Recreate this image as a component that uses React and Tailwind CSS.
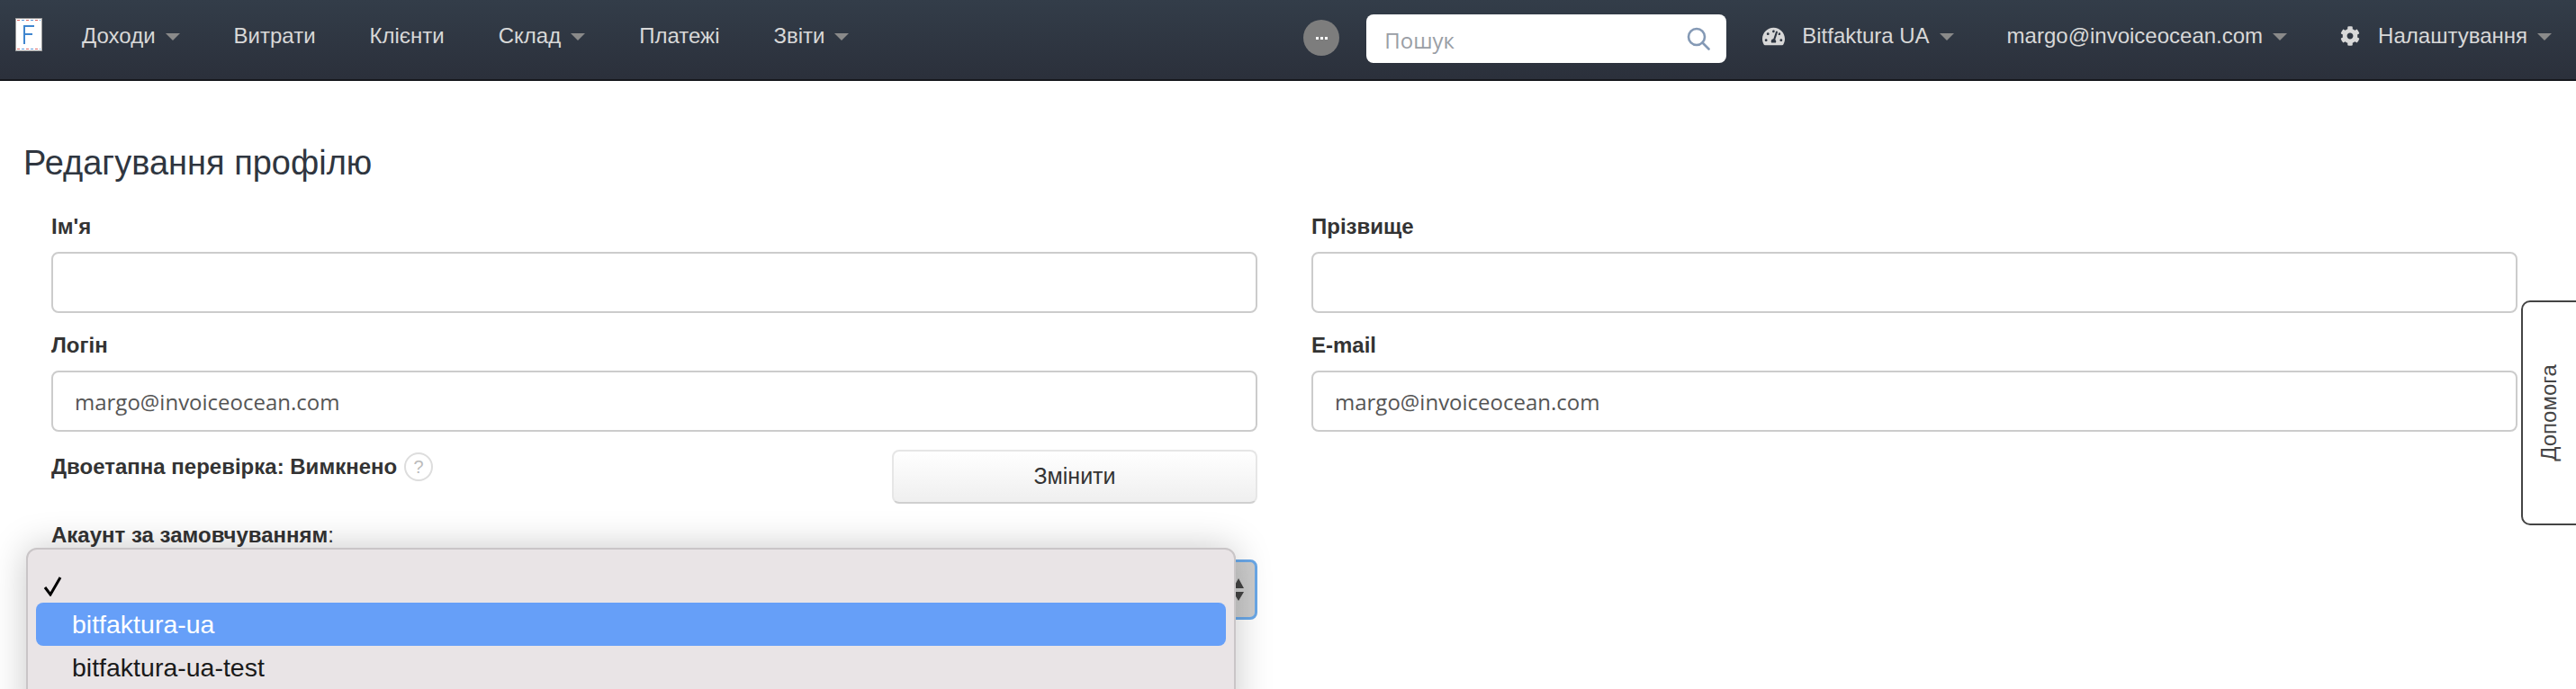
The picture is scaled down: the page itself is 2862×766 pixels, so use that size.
import React from "react";
import { FaCog, FaTachometerAlt } from "react-icons/fa";

const font = "font-['Liberation_Sans',Arial,sans-serif]";

function Caret() {
  return <span className="ml-[11px] mt-[1px] inline-block h-0 w-0 border-x-[8px] border-t-[8px] border-x-transparent border-t-[#8a8a8a]" />;
}

function NavItem({ label, caret, className }) {
  return (
    <a className={"flex items-center whitespace-nowrap text-[24px] text-[#d8d8d8] " + (className || "")}>
      {label}
      {caret && <Caret />}
    </a>
  );
}

function Logo() {
  return (
    <div className="mb-[11px] flex h-[37px] w-[30px] flex-col items-center justify-between border border-[#999] bg-white py-[1px]">
      <div className="h-[1px] w-[26px] bg-[repeating-linear-gradient(90deg,#e0655f_0,#e0655f_3px,#fff_3px,#fff_5px,#5a9bdc_5px,#5a9bdc_8px,#fff_8px,#fff_10px)]" />
      <svg width="12" height="21" viewBox="0 0 12 21">
        <path d="M1 0v21M1 1h11M1 10h9" stroke="#3f86cf" strokeWidth="2" fill="none" />
      </svg>
      <div className="h-[1px] w-[26px] bg-[repeating-linear-gradient(90deg,#e0655f_0,#e0655f_3px,#fff_3px,#fff_5px,#5a9bdc_5px,#5a9bdc_8px,#fff_8px,#fff_10px)]" />
    </div>
  );
}

function Field({ label, value }) {
  return (
    <div className="flex flex-col">
      <label className="mb-[14px] h-[30px] pt-[2px] text-[24px] font-bold leading-[28px] text-[#333]">{label}</label>
      <div className="flex h-[68px] items-center rounded-[8px] border-2 border-[#ccc] bg-white pl-[24px] pt-[2px] font-['Open_Sans',sans-serif] text-[24px] text-[#555]">
        {value}
      </div>
    </div>
  );
}

function Header() {
  return (
    <header className="flex h-[90px] items-center border-b-2 border-[#16181d] bg-gradient-to-b from-[#333d49] to-[#2b303b] pl-[17px]">
      <Logo />
      <nav className="mb-[8px] ml-[44px] flex">
        <NavItem label="Доходи" caret className="mr-[60px]" />
        <NavItem label="Витрати" className="mr-[60px]" />
        <NavItem label="Клієнти" className="mr-[60px]" />
        <NavItem label="Склад" caret className="mr-[60px]" />
        <NavItem label="Платежі" className="mr-[60px]" />
        <NavItem label="Звіти" caret />
      </nav>
      <div className="mb-[2px] ml-auto flex items-center pr-[27px]">
        <div className="mb-[2px] flex h-[40px] w-[40px] items-center justify-center gap-[2px] rounded-full bg-[#7d7d7d]">
          <span className="h-[3px] w-[3px] bg-white" />
          <span className="h-[3px] w-[3px] bg-white" />
          <span className="h-[3px] w-[3px] bg-white" />
        </div>
        <div className="ml-[30px] flex h-[54px] w-[400px] items-center justify-between rounded-[8px] bg-white pl-[20px] pr-[18px]">
          <span className="mt-[3px] font-['Open_Sans',sans-serif] text-[24px] text-[#9a9ea5]">Пошук</span>
          <svg width="26" height="26" viewBox="0 0 26 26" fill="none" stroke="#8499b5" strokeWidth="2.6">
            <circle cx="11" cy="11" r="9" />
            <path d="M17.500 17.500 24.500 24.500" strokeLinecap="round" />
          </svg>
        </div>
        <div className="mb-[6px] ml-[40px] flex items-center">
          <FaTachometerAlt className="mr-[19px] text-[25px] text-[#d8d8d8]" />
          <NavItem label="Bitfaktura UA" caret />
        </div>
        <NavItem label="margo@invoiceocean.com" caret className="mb-[6px] ml-[59px]" />
        <div className="mb-[6px] ml-[59px] flex items-center">
          <FaCog className="mr-[20px] text-[22px] text-[#d8d8d8]" />
          <NavItem label="Налаштування" caret />
        </div>
      </div>
    </header>
  );
}

function SelectPopup() {
  return (
    <div className="absolute left-[29px] top-[609px] h-[200px] w-[1344px] rounded-t-[12px] border-2 border-[#c9c5c7] bg-[#e9e4e6] px-[9px] pt-[23px] text-[28.5px] text-[#1a1a1a] shadow-[0_0_40px_rgba(0,0,0,0.22)]">
      <div className="flex h-[36px] items-center pl-[8px]">
        <svg width="22" height="22" viewBox="0 0 22 22" fill="none" stroke="#000" strokeWidth="3">
          <path d="M2 12l6 8L19 1" />
        </svg>
      </div>
      <div className="flex h-[48px] items-center rounded-[8px] bg-[#669ff8] pl-[40px] text-white">bitfaktura-ua</div>
      <div className="flex h-[48px] items-center pl-[40px]">bitfaktura-ua-test</div>
    </div>
  );
}

export default function App() {
  return (
    <div className={"relative h-[766px] overflow-hidden bg-white " + font}>
      <Header />
      <main className="pl-[26px]">
        <h1 className="mt-[68px] text-[38px] font-normal leading-[46px] text-[#2f3640]">Редагування профілю</h1>
        <div className="mt-[32px] grid grid-cols-[1340px_1340px] gap-x-[60px] gap-y-[20px] pl-[31px]">
          <Field label="Ім'я" value="" />
          <Field label="Прізвище" value="" />
          <Field label="Логін" value="margo@invoiceocean.com" />
          <Field label="E-mail" value="margo@invoiceocean.com" />
          <div>
            <div className="flex h-[60px] items-start justify-between">
              <div className="flex items-center pt-[1px] text-[24px] font-bold text-[#333]">
                Двоетапна перевірка: Вимкнено
                <span className="ml-[8px] flex h-[32px] w-[32px] items-center justify-center rounded-full border-2 border-[#ddd] text-[20px] font-normal text-[#bbb]">?</span>
              </div>
              <button className="h-[60px] w-[406px] rounded-[8px] border-2 border-[#e6e6e6] border-b-[#cfcfcf] bg-gradient-to-b from-white to-[#efefef] text-[25px] text-[#333]">
                Змінити
              </button>
            </div>
            <div className="mt-[21px] h-[28px] text-[24px] leading-[28px] text-[#333]">
              <label className="font-bold">Акаунт за замовчуванням</label>:
            </div>
            <div className="mt-[13px] flex h-[67px] items-center justify-end rounded-[8px] border-[3px] border-[#6aa8e8] bg-gradient-to-r from-[#e8e8e8] to-[#cdcdcd] pr-[12px]">
              <svg width="12" height="25" viewBox="0 0 12 25" fill="#444">
                <path d="M6 0 12 11H0ZM0 15H12L6 25Z" />
              </svg>
            </div>
          </div>
        </div>
      </main>
      <aside className="absolute right-[-10px] top-[334px] flex h-[250px] w-[71px] items-center justify-center rounded-l-[10px] border-2 border-[#444] bg-white pr-[10px]">
        <span className="-rotate-90 whitespace-nowrap text-[24px] text-[#444]">Допомога</span>
      </aside>
      <SelectPopup />
    </div>
  );
}
